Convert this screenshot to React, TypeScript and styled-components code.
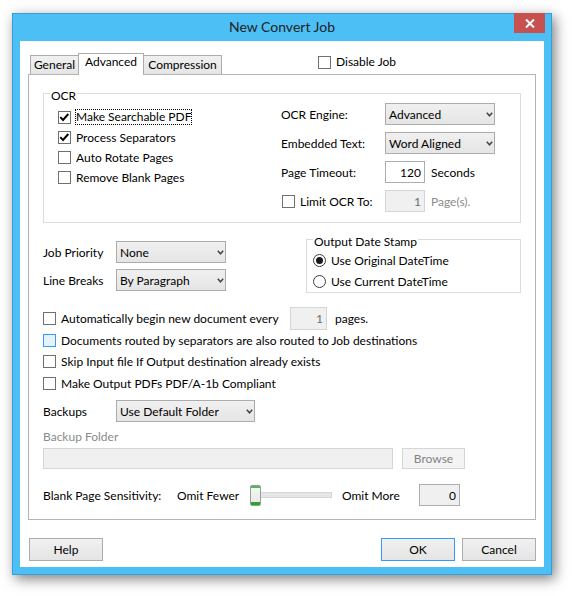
import React from "react";
import styled, { createGlobalStyle, css } from "styled-components";

const FONT = `"Lato", "Segoe UI", "Liberation Sans", sans-serif`;

const GlobalStyle = createGlobalStyle`
  html, body { margin: 0; padding: 0; background: #ffffff; }
  body { font-family: ${FONT}; font-size: 12px; color: #000; }
  * { box-sizing: border-box; }
`;

const Screen = styled.div`
  padding: 13px 20px 21px 12px;
`;

const Window = styled.div`
  width: 540px;
  height: 562px;
  background: #4cbff5;
  box-shadow: inset 0 0 0 1px rgba(30, 120, 175, 0.45), 3px 4px 12px rgba(0, 0, 0, 0.5);
  display: flex;
  flex-direction: column;
`;

const TitleBar = styled.div`
  height: 28px;
  flex: none;
  display: grid;
  grid-template-columns: 1fr auto 1fr;
  align-items: start;
`;

const Title = styled.div`
  grid-column: 2;
  line-height: 28px;
  font-size: 14px;
  color: #222;
`;

const CloseButton = styled.div`
  grid-column: 3;
  justify-self: end;
  margin-right: 7px;
  width: 31px;
  height: 20px;
  background: #c75050;
  display: flex;
  align-items: center;
  justify-content: center;
`;

const Client = styled.div`
  flex: 1;
  margin: 0 8px 8px;
  background: #fff;
  padding: 12px 8px 6px;
  display: flex;
  flex-direction: column;
`;

const TabHeader = styled.div`
  display: flex;
  height: 21px;
  padding-left: 2px;
`;

const TabStrip = styled.div`
  display: flex;
  align-items: flex-end;
`;

const Tab = styled.div<{ $w: number; $active?: boolean }>`
  position: relative;
  width: ${(p) => p.$w}px;
  margin-left: -1px;
  &:first-child {
    margin-left: 0;
  }
  border: 1px solid #acacac;
  border-bottom: none;
  text-align: center;
  line-height: 16px;
  ${(p) =>
    p.$active
      ? css`
          height: 22px;
          margin-bottom: -1px;
          background: #fff;
          z-index: 1;
        `
      : css`
          height: 19px;
          padding-top: 1px;
          background: linear-gradient(#f0f0f0, #e5e5e5);
        `}
`;

const HeaderCheck = styled.label`
  margin-left: 96px;
  margin-top: 1px;
  align-self: flex-start;
  display: flex;
  align-items: center;
  gap: 5px;
  line-height: 16px;
`;

const Panel = styled.div`
  height: 446px;
  flex: none;
  border: 1px solid #b4b4b4;
  padding: 18px 14px 0;
  display: flex;
  flex-direction: column;
`;

const GroupBox = styled.div<{ $w?: number }>`
  border: 1px solid #dcdcdc;
  display: flex;
  flex-direction: column;
  ${(p) => (p.$w ? `width: ${p.$w}px;` : "")}
`;

const GroupTitle = styled.div`
  align-self: flex-start;
  margin: -6px 0 -6px 6px;
  padding: 0 1px;
  background: #fff;
  line-height: 16px;
`;

const OcrBody = styled.div`
  display: flex;
  padding: 5px 0 10px;
`;

const OcrLeft = styled.div`
  width: 237px;
  padding: 4px 0 0 14px;
  display: flex;
  flex-direction: column;
`;

const OcrGrid = styled.div`
  display: grid;
  grid-template-columns: 104px auto 1fr;
  grid-auto-rows: 22px;
  row-gap: 7px;
  align-items: center;
`;

const CheckRow = styled.label<{ $h?: number; $pad?: number }>`
  display: flex;
  align-items: center;
  gap: 5px;
  height: ${(p) => p.$h ?? 20}px;
  padding-left: ${(p) => p.$pad ?? 0}px;
  white-space: nowrap;
`;

const Box = styled.span<{ $hover?: boolean }>`
  width: 13px;
  height: 13px;
  flex: none;
  border: 1px solid ${(p) => (p.$hover ? "#3399ff" : "#707070")};
  background: ${(p) => (p.$hover ? "#e5f1fb" : "#fff")};
  display: inline-flex;
  align-items: center;
  justify-content: center;
`;

const FocusText = styled.span`
  margin: 0 -1px;
  border: 1px dotted #000;
  line-height: 14px;
`;

const RadioDot = styled.span<{ $checked?: boolean }>`
  width: 13px;
  height: 13px;
  flex: none;
  border-radius: 50%;
  border: 1px solid #3c3c3c;
  background: #fff;
  display: inline-flex;
  align-items: center;
  justify-content: center;
  &::after {
    content: "";
    display: ${(p) => (p.$checked ? "block" : "none")};
    width: 7px;
    height: 7px;
    border-radius: 50%;
    background: #1a1a1a;
  }
`;

const FieldLabel = styled.span<{ $muted?: boolean }>`
  white-space: nowrap;
  color: ${(p) => (p.$muted ? "#8a8a8a" : "#000")};
`;

const Unit = styled.span<{ $muted?: boolean; $gap?: number }>`
  margin-left: ${(p) => p.$gap ?? 6}px;
  white-space: nowrap;
  color: ${(p) => (p.$muted ? "#8a8a8a" : "#000")};
`;

const SelectBox = styled.div<{ $w: number; $span?: boolean }>`
  width: ${(p) => p.$w}px;
  height: 22px;
  border: 1px solid #acacac;
  background: linear-gradient(#f0f0f0, #e5e5e5);
  display: flex;
  align-items: center;
  justify-content: space-between;
  padding: 0 1px 0 3px;
  white-space: nowrap;
  ${(p) => (p.$span ? "grid-column: 2 / span 2;" : "")}
`;

const TextBox = styled.div<{ $w: number; $h?: number; $disabled?: boolean; $readonly?: boolean }>`
  width: ${(p) => p.$w}px;
  height: ${(p) => p.$h ?? 22}px;
  flex: none;
  border: 1px solid ${(p) => (p.$disabled ? "#d5d5d5" : "#abadb3")};
  background: ${(p) => (p.$disabled || p.$readonly ? "#f0f0f0" : "#fff")};
  color: ${(p) => (p.$disabled ? "#6d6d6d" : "#000")};
  display: flex;
  align-items: center;
  justify-content: flex-end;
  padding-right: 3px;
`;

const MiddleRow = styled.div`
  display: flex;
  margin-top: 17px;
`;

const MiddleLeft = styled.div`
  margin-top: 1px;
  display: grid;
  grid-template-columns: 73px auto;
  grid-auto-rows: 22px;
  row-gap: 6px;
  align-items: center;
`;

const RadioList = styled.div`
  display: flex;
  flex-direction: column;
  gap: 1px;
  padding: 6px 0 1px 6px;
`;

const RightGroup = styled(GroupBox)`
  margin-left: auto;
  margin-top: -1px;
`;

const Options = styled.div`
  margin-top: 14px;
  display: flex;
  flex-direction: column;
`;

const LongText = styled.span`
  width: 224px;
  white-space: nowrap;
`;

const FormRow = styled.div<{ $mt: number }>`
  display: flex;
  align-items: center;
  margin-top: ${(p) => p.$mt}px;
`;

const RowLabel = styled.span<{ $w: number }>`
  width: ${(p) => p.$w}px;
  flex: none;
  white-space: nowrap;
`;

const MutedCaption = styled.div`
  margin-top: 7px;
  line-height: 16px;
  color: #8a8a8a;
`;

const FolderRow = styled.div`
  display: flex;
  align-items: center;
  gap: 9px;
  margin-top: 3px;
`;

const DisabledButton = styled.div`
  width: 63px;
  height: 21px;
  margin-top: -1px;
  border: 1px solid #d5d5d5;
  background: #f4f4f4;
  color: #838383;
  display: flex;
  align-items: center;
  justify-content: center;
`;

const SliderRow = styled.div`
  display: flex;
  align-items: center;
  margin-top: 15px;
  height: 22px;
`;

const Slider = styled.div`
  width: 82px;
  margin-right: 10px;
  display: flex;
  align-items: center;
`;

const Thumb = styled.span`
  width: 11px;
  height: 21px;
  flex: none;
  border: 1px solid #8fa38f;
  border-radius: 2px;
  background: linear-gradient(
    #54b954 0,
    #54b954 2px,
    #f6f6f6 2px,
    #e9e9e9 calc(100% - 3px),
    #2fa22f calc(100% - 3px)
  );
`;

const Track = styled.span`
  flex: 1;
  height: 6px;
  background: #e6e6e6;
  border: 1px solid #d6d6d6;
  border-left: none;
`;

const ButtonBar = styled.div`
  display: flex;
  margin-top: 18px;
  padding-left: 1px;
  gap: 7px;
`;

const DialogButton = styled.div<{ $default?: boolean }>`
  width: 74px;
  height: 23px;
  border: 1px solid ${(p) => (p.$default ? "#3399ff" : "#acacac")};
  background: linear-gradient(#f0f0f0, #e5e5e5);
  display: flex;
  align-items: center;
  justify-content: center;
  &:first-child {
    margin-right: auto;
  }
`;

const CheckIcon = () => (
  <svg width="11" height="11" viewBox="0 0 11 11">
    <path d="M1.3 5.2 L4 8 L9.3 2" fill="none" stroke="#000" strokeWidth="1.9" />
  </svg>
);

const CheckBox = ({ checked, hover }: { checked?: boolean; hover?: boolean }) => (
  <Box $hover={hover}>{checked ? <CheckIcon /> : null}</Box>
);

const Arrow = () => (
  <svg width="7" height="5" viewBox="0 0 7 5">
    <path d="M0.8 0.8 L3.5 3.8 L6.2 0.8" fill="none" stroke="#444" strokeWidth="1.5" />
  </svg>
);

const Select = ({ w, value, span }: { w: number; value: string; span?: boolean }) => (
  <SelectBox $w={w} $span={span}>
    <span>{value}</span>
    <Arrow />
  </SelectBox>
);

const CloseIcon = () => (
  <svg width="10" height="9" viewBox="0 0 10 9">
    <path d="M1 0.5 L9 8.5 M9 0.5 L1 8.5" stroke="#fff" strokeWidth="2" />
  </svg>
);

export default function App() {
  return (
    <>
      <GlobalStyle />
      <Screen>
        <Window>
          <TitleBar>
            <Title>New Convert Job</Title>
            <CloseButton>
              <CloseIcon />
            </CloseButton>
          </TitleBar>
          <Client>
            <TabHeader>
              <TabStrip>
                <Tab $w={49}>General</Tab>
                <Tab $w={66} $active>
                  Advanced
                </Tab>
                <Tab $w={79}>Compression</Tab>
              </TabStrip>
              <HeaderCheck>
                <CheckBox />
                <span>Disable Job</span>
              </HeaderCheck>
            </TabHeader>
            <Panel>
              <GroupBox>
                <GroupTitle>OCR</GroupTitle>
                <OcrBody>
                  <OcrLeft>
                    <CheckRow>
                      <CheckBox checked />
                      <FocusText>Make Searchable PDF</FocusText>
                    </CheckRow>
                    <CheckRow>
                      <CheckBox checked />
                      <span>Process Separators</span>
                    </CheckRow>
                    <CheckRow>
                      <CheckBox />
                      <span>Auto Rotate Pages</span>
                    </CheckRow>
                    <CheckRow>
                      <CheckBox />
                      <span>Remove Blank Pages</span>
                    </CheckRow>
                  </OcrLeft>
                  <OcrGrid>
                    <FieldLabel>OCR Engine:</FieldLabel>
                    <Select w={110} value="Advanced" span />
                    <FieldLabel>Embedded Text:</FieldLabel>
                    <Select w={110} value="Word Aligned" span />
                    <FieldLabel>Page Timeout:</FieldLabel>
                    <TextBox $w={40}>120</TextBox>
                    <Unit>Seconds</Unit>
                    <CheckRow $pad={1}>
                      <CheckBox />
                      <span>Limit OCR To:</span>
                    </CheckRow>
                    <TextBox $w={40} $disabled>
                      1
                    </TextBox>
                    <Unit $muted>Page(s).</Unit>
                  </OcrGrid>
                </OcrBody>
              </GroupBox>

              <MiddleRow>
                <MiddleLeft>
                  <FieldLabel>Job Priority</FieldLabel>
                  <Select w={110} value="None" />
                  <FieldLabel>Line Breaks</FieldLabel>
                  <Select w={110} value="By Paragraph" />
                </MiddleLeft>
                <RightGroup $w={215}>
                  <GroupTitle>Output Date Stamp</GroupTitle>
                  <RadioList>
                    <CheckRow>
                      <RadioDot $checked />
                      <span>Use Original DateTime</span>
                    </CheckRow>
                    <CheckRow>
                      <RadioDot />
                      <span>Use Current DateTime</span>
                    </CheckRow>
                  </RadioList>
                </RightGroup>
              </MiddleRow>

              <Options>
                <CheckRow $h={22}>
                  <CheckBox />
                  <LongText>Automatically begin new document every</LongText>
                  <TextBox $w={37} $h={23} $disabled>
                    1
                  </TextBox>
                  <Unit $gap={3}>pages.</Unit>
                </CheckRow>
                <CheckRow $h={22}>
                  <CheckBox hover />
                  <span>Documents routed by separators are also routed to Job destinations</span>
                </CheckRow>
                <CheckRow $h={21}>
                  <CheckBox />
                  <span>Skip Input file If Output destination already exists</span>
                </CheckRow>
                <CheckRow $h={22}>
                  <CheckBox />
                  <span>Make Output PDFs PDF/A-1b Compliant</span>
                </CheckRow>
              </Options>

              <FormRow $mt={6}>
                <RowLabel $w={73}>Backups</RowLabel>
                <Select w={139} value="Use Default Folder" />
              </FormRow>

              <MutedCaption>Backup Folder</MutedCaption>
              <FolderRow>
                <TextBox $w={350} $h={21} $disabled />
                <DisabledButton>Browse</DisabledButton>
              </FolderRow>

              <SliderRow>
                <RowLabel $w={134}>Blank Page Sensitivity:</RowLabel>
                <RowLabel $w={73}>Omit Fewer</RowLabel>
                <Slider>
                  <Thumb />
                  <Track />
                </Slider>
                <RowLabel $w={77}>Omit More</RowLabel>
                <TextBox $w={41} $readonly>
                  0
                </TextBox>
              </SliderRow>
            </Panel>
            <ButtonBar>
              <DialogButton>Help</DialogButton>
              <DialogButton $default>OK</DialogButton>
              <DialogButton>Cancel</DialogButton>
            </ButtonBar>
          </Client>
        </Window>
      </Screen>
    </>
  );
}
